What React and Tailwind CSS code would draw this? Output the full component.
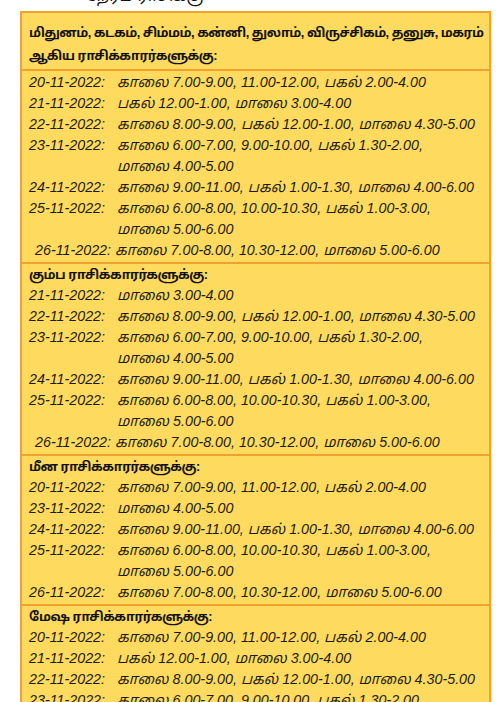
import React from "react"

const SECTIONS = [
    {
        title: ["மிதுனம், கடகம், சிம்மம், கன்னி, துலாம், விருச்சிகம், தனுசு, மகரம்", "ஆகிய ராசிக்காரர்களுக்கு:"],
        rows: [
            ["20-11-2022:", ["காலை 7.00-9.00, 11.00-12.00, பகல் 2.00-4.00"]],
            ["21-11-2022:", ["பகல் 12.00-1.00, மாலை 3.00-4.00"]],
            ["22-11-2022:", ["காலை 8.00-9.00, பகல் 12.00-1.00, மாலை 4.30-5.00"]],
            ["23-11-2022:", ["காலை 6.00-7.00, 9.00-10.00, பகல் 1.30-2.00,", "மாலை 4.00-5.00"]],
            ["24-11-2022:", ["காலை 9.00-11.00, பகல் 1.00-1.30, மாலை 4.00-6.00"]],
            ["25-11-2022:", ["காலை 6.00-8.00, 10.00-10.30, பகல் 1.00-3.00,", "மாலை 5.00-6.00"]],
        ],
        last: "26-11-2022: காலை 7.00-8.00, 10.30-12.00, மாலை 5.00-6.00",
        indentLast: true,
    },
    {
        title: ["கும்ப ராசிக்காரர்களுக்கு:"],
        rows: [
            ["21-11-2022:", ["மாலை 3.00-4.00"]],
            ["22-11-2022:", ["காலை 8.00-9.00, பகல் 12.00-1.00, மாலை 4.30-5.00"]],
            ["23-11-2022:", ["காலை 6.00-7.00, 9.00-10.00, பகல் 1.30-2.00,", "மாலை 4.00-5.00"]],
            ["24-11-2022:", ["காலை 9.00-11.00, பகல் 1.00-1.30, மாலை 4.00-6.00"]],
            ["25-11-2022:", ["காலை 6.00-8.00, 10.00-10.30, பகல் 1.00-3.00,", "மாலை 5.00-6.00"]],
        ],
        last: "26-11-2022: காலை 7.00-8.00, 10.30-12.00, மாலை 5.00-6.00",
        indentLast: true,
    },
    {
        title: ["மீன ராசிக்காரர்களுக்கு:"],
        rows: [
            ["20-11-2022:", ["காலை 7.00-9.00, 11.00-12.00, பகல் 2.00-4.00"]],
            ["23-11-2022:", ["மாலை 4.00-5.00"]],
            ["24-11-2022:", ["காலை 9.00-11.00, பகல் 1.00-1.30, மாலை 4.00-6.00"]],
            ["25-11-2022:", ["காலை 6.00-8.00, 10.00-10.30, பகல் 1.00-3.00,", "மாலை 5.00-6.00"]],
            ["26-11-2022:", ["காலை 7.00-8.00, 10.30-12.00, மாலை 5.00-6.00"]],
        ],
    },
    {
        title: ["மேஷ ராசிக்காரர்களுக்கு:"],
        rows: [
            ["20-11-2022:", ["காலை 7.00-9.00, 11.00-12.00, பகல் 2.00-4.00"]],
            ["21-11-2022:", ["பகல் 12.00-1.00, மாலை 3.00-4.00"]],
            ["22-11-2022:", ["காலை 8.00-9.00, பகல் 12.00-1.00, மாலை 4.30-5.00"]],
            ["23-11-2022:", ["காலை 6.00-7.00, 9.00-10.00, பகல் 1.30-2.00,", "மாலை 4.00-5.00"]],
        ],
    },
]

const Row = ({ date, lines }) => (
    <div className="grid grid-cols-[88px_1fr]">
        <div>{date}</div>
        <div>
            {lines.map((l, i) => (
                <div key={i}>{l}</div>
            ))}
        </div>
    </div>
)

const Section = ({ section, first }) => (
    <div className={first ? "" : "border-t-2 border-[#f3a12e]"}>
        <div className={`px-[7px] font-bold text-[12.8px] tracking-[-0.5px] whitespace-nowrap text-[#111] ${first ? "border-b-2 border-[#f3a12e] pt-[8px] pb-[2px] leading-[23px]" : "leading-[21px]"}`}>
            {section.title.map((t, i) => (
                <div key={i}>{t}</div>
            ))}
        </div>
        <div className={`px-[7px] italic text-[14.3px] leading-[21px] text-[#1c1a14] pb-[1px] ${first ? "pt-[1px]" : ""}`}>
            {section.rows.map(([d, l]) => (
                <Row key={d} date={d} lines={l} />
            ))}
            {section.last && (
                <div className={section.indentLast ? "pl-[6px]" : ""}>{section.last}</div>
            )}
        </div>
    </div>
)

export default function App() {
    return (
        <div className="w-[500px] h-[702px] overflow-hidden bg-white font-['Liberation_Sans','Noto_Sans_Tamil','Lohit_Tamil',sans-serif]">
            <div className="-mt-[16px] h-[27px] pl-[85px] text-[16px] leading-[24px] text-[#111]">
                நேரம் ராசிக்கு
            </div>
            <div className="ml-[20px] w-[471px] bg-[#fedb5f] border-2 border-b-0 border-[#f3a12e]">
                {SECTIONS.map((s, i) => (
                    <Section key={i} section={s} first={i === 0} />
                ))}
            </div>
        </div>
    )
}
